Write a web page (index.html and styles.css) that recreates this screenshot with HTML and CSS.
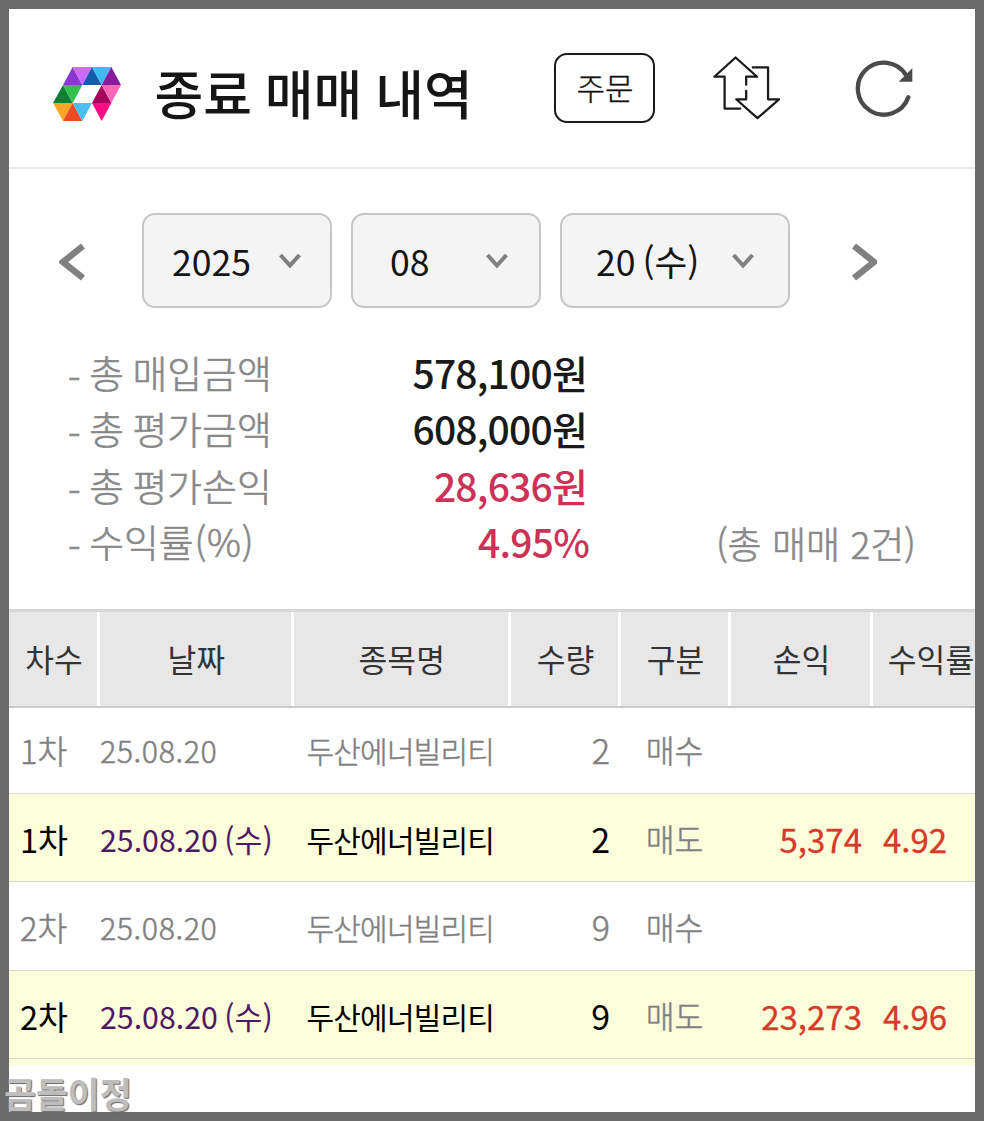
FILE: index.html
```html
<!DOCTYPE html>
<html lang="ko">
<head>
    <meta charset="UTF-8">
    <meta name="viewport" content="width=device-width, initial-scale=1.0">
    <title>종료 매매 내역</title>
    <link rel="stylesheet" href="styles.css">
</head>
<body>
    <div class="screen">
        <header class="header">
            <svg class="logo" viewBox="158 201 204 162">
                <polygon fill="#8a36d2" points="188,255 217,201 246,255"/>
                <polygon fill="#cb6afc" points="217,201 275,201 246,255"/>
                <polygon fill="#145ba8" points="246,255 275,201 304,255"/>
                <polygon fill="#3fbbf4" points="275,201 333,201 304,255"/>
                <polygon fill="#881b9e" points="304,255 333,201 362,255"/>
                <polygon fill="#0b8131" points="158,309 188,255 217,309"/>
                <polygon fill="#32c04b" points="188,255 246,255 217,309"/>
                <polygon fill="#a6045c" points="275,309 304,255 333,309"/>
                <polygon fill="#fc68b8" points="304,255 362,255 333,309"/>
                <polygon fill="#fca426" points="158,309 217,309 188,363"/>
                <polygon fill="#ec4b25" points="188,363 217,309 246,363"/>
                <polygon fill="#4cbdf0" points="217,309 275,309 246,363"/>
                <polygon fill="#fc0d84" points="275,309 333,309 304,363"/>
            </svg>
            <h1 class="title">종료 매매 내역</h1>
            <button type="button" class="order-btn">주문</button>
            <svg class="swap-icon" viewBox="70 50 202 192">
                <path d="M152 208H105V112H74L138 54L203 112H170V136"/>
                <path d="M170 155V180H140L204 237L269 180H236V84H190"/>
            </svg>
            <svg class="refresh-icon" viewBox="495 58 174 174">
                <path class="arc" d="M655 173A78 78 0 1 1 648 106"/>
                <polygon points="667,86 667,126 626,126"/>
            </svg>
        </header>

        <div class="date-nav">
            <svg class="arrow prev" viewBox="0 0 26 38"><path d="M24 3L4 19L24 35"/></svg>
            <div class="select year"><span>2025</span><svg class="caret" viewBox="0 0 22 16"><path d="M1.5 2L11 12.5L20.5 2"/></svg></div>
            <div class="select month"><span>08</span><svg class="caret" viewBox="0 0 22 16"><path d="M1.5 2L11 12.5L20.5 2"/></svg></div>
            <div class="select day"><span>20 (수)</span><svg class="caret" viewBox="0 0 22 16"><path d="M1.5 2L11 12.5L20.5 2"/></svg></div>
            <svg class="arrow next" viewBox="0 0 26 38"><path d="M3 3L23 19L3 35"/></svg>
        </div>

        <div class="summary">
            <div class="line"><span class="label"><span class="dash">-</span> 총 매입금액</span><span class="value">578,100원</span></div>
            <div class="line"><span class="label"><span class="dash">-</span> 총 평가금액</span><span class="value">608,000원</span></div>
            <div class="line"><span class="label"><span class="dash">-</span> 총 평가손익</span><span class="value up">28,636원</span></div>
            <div class="line"><span class="label"><span class="dash">-</span> 수익률<span class="unit">(%)</span></span><span class="value up percent">4.95%</span><span class="count">(총 매매 2건)</span></div>
        </div>

        <div class="table-wrap">
            <table class="trades">
                <colgroup>
                    <col class="c-no"><col class="c-date"><col class="c-name"><col class="c-qty"><col class="c-type"><col class="c-profit"><col class="c-rate">
                </colgroup>
                <thead>
                    <tr><th>차수</th><th>날짜</th><th>종목명</th><th>수량</th><th>구분</th><th>손익</th><th>수익률</th></tr>
                </thead>
                <tbody>
                    <tr class="buy first">
                        <td class="no">1차</td><td class="date">25.08.20</td><td class="name">두산에너빌리티</td><td class="qty">2</td><td class="type">매수</td><td class="profit"></td><td class="rate"></td>
                    </tr>
                    <tr class="sell">
                        <td class="no">1차</td><td class="date">25.08.20 (수)</td><td class="name">두산에너빌리티</td><td class="qty">2</td><td class="type">매도</td><td class="profit">5,374</td><td class="rate">4.92</td>
                    </tr>
                    <tr class="buy">
                        <td class="no">2차</td><td class="date">25.08.20</td><td class="name">두산에너빌리티</td><td class="qty">9</td><td class="type">매수</td><td class="profit"></td><td class="rate"></td>
                    </tr>
                    <tr class="sell">
                        <td class="no">2차</td><td class="date">25.08.20 (수)</td><td class="name">두산에너빌리티</td><td class="qty">9</td><td class="type">매도</td><td class="profit">23,273</td><td class="rate">4.96</td>
                    </tr>
                </tbody>
            </table>
            <div class="table-end"></div>
        </div>
        <div class="watermark">곰돌이정</div>
    </div>
</body>
</html>
```
FILE: styles.css
```css
* {
    box-sizing: border-box;
}
body {
    margin: 0;
    font-family: "Noto Sans CJK KR", sans-serif;
    color: #1a1a1a;
    background-color: #6b6b6b;
}
.screen {
    position: relative;
    height: 1121px;
    border: 9px solid #6b6b6b;
    background-color: #fff;
}
svg {
    display: block;
    flex: none;
    fill: none;
}

/* header */
.header {
    display: flex;
    align-items: center;
    height: 160px;
    padding-left: 43.5px;
    border-bottom: 2px solid #e8e8e8;
}
.logo {
    width: 68px;
    height: 54px;
    margin-top: 12px;
}
.title {
    width: 399px;
    margin: 7px 0 0 34px;
    font-size: 53px;
    font-weight: 500;
    line-height: 80px;
    word-spacing: -2px;
    color: #151515;
    white-space: nowrap;
}
.order-btn {
    width: 101px;
    height: 70px;
    margin-top: -1px;
    padding: 0 0 3px 2px;
    border: 2px solid #1a1a1a;
    border-radius: 13px;
    background-color: #fff;
    font-family: inherit;
    font-size: 31px;
    font-weight: 300;
    color: #111;
    -webkit-text-stroke: 0.3px;
}
.swap-icon {
    width: 67px;
    height: 64px;
    margin-left: 58px;
    stroke: #1a1a1a;
    stroke-width: 6.8;
    stroke-linecap: round;
    stroke-linejoin: round;
}
.refresh-icon {
    width: 58px;
    height: 58px;
    margin-left: 75px;
    fill: #4a4a4a;
}
.refresh-icon .arc {
    fill: none;
    stroke: #4a4a4a;
    stroke-width: 13;
    stroke-linecap: round;
}

/* date selector */
.date-nav {
    display: flex;
    align-items: center;
    height: 95px;
    margin-top: 43.5px;
    padding-left: 50px;
}
.arrow {
    width: 26px;
    height: 38px;
    margin-top: 3px;
    stroke: #808080;
    stroke-width: 6.5;
}
.select {
    display: flex;
    align-items: center;
    justify-content: space-between;
    width: 189.5px;
    height: 95px;
    margin-right: 19.5px;
    border: 2px solid #c6c6c6;
    border-radius: 13px;
    background-color: #f4f4f4;
    font-size: 35.6px;
    word-spacing: -3px;
    color: #151515;
}
.year {
    margin-left: 57px;
    padding: 0 29px 0 28px;
}
.month {
    padding: 0 31px 0 37px;
}
.day {
    width: 229.5px;
    padding: 0 34px;
}
.caret {
    width: 22px;
    height: 16px;
    margin-top: 2px;
    stroke: #808080;
    stroke-width: 4;
}
.next {
    margin-left: 42px;
}

/* totals */
.summary {
    margin-top: 36px;
    padding-left: 59px;
}
.line {
    display: flex;
    height: 56.5px;
    line-height: 56.5px;
    white-space: nowrap;
}
.label,
.count {
    font-weight: 300;
    color: #888;
    -webkit-text-stroke: 0.6px;
}
.label {
    width: 259px;
    font-size: 37.8px;
    word-spacing: -2px;
}
.dash {
    line-height: 1;
    vertical-align: -5px;
}
.unit {
    margin-left: 1px;
    letter-spacing: 0.7px;
}
.value {
    width: 260px;
    font-size: 39px;
    font-weight: 500;
    letter-spacing: -0.8px;
    text-align: right;
}
.value.up {
    color: #cb3256;
}
.value.percent {
    width: 262px;
}
.count {
    margin-left: 127px;
    padding-top: 2px;
    font-size: 37px;
}

/* trade list */
.table-wrap {
    margin-top: 39px;
    overflow: hidden;
}
.trades {
    width: 981px;
    table-layout: fixed;
    border-spacing: 0;
}
.c-no { width: 91px; }
.c-date { width: 193.5px; }
.c-name { width: 217.5px; }
.c-qty { width: 110px; }
.c-type { width: 110px; }
.c-profit { width: 142px; }
.c-rate { width: 117px; }
.trades th {
    height: 99px;
    padding: 0 1px 0 0;
    border-top: 3px solid #d6d6d6;
    border-bottom: 2px solid #cbcbcb;
    background: linear-gradient(#fff, #fff) right / 3px 100% no-repeat #e7e7e7;
    background-clip: padding-box;
    font-size: 31.3px;
    font-weight: 400;
    color: #333;
}
.trades td {
    height: 88.5px;
    padding: 3px 0 0;
    border-bottom: 1px solid #d6d9c0;
    font-size: 31.3px;
    font-weight: 300;
    line-height: 44px;
    color: #808080;
    white-space: nowrap;
    -webkit-text-stroke: 0.5px;
}
.trades .first td {
    height: 86px;
    padding-top: 0;
    border-bottom-color: #deded8;
}
.trades .sell td {
    background-color: #fcfddb;
}
.trades .no {
    padding-left: 11px;
    font-size: 32.5px;
}
.trades .date {
    font-size: 30.3px;
    word-spacing: -2px;
}
.trades .buy .date {
    letter-spacing: 0.6px;
}
.trades .name {
    padding-left: 13px;
    font-size: 30px;
    letter-spacing: -0.8px;
}
.trades .qty {
    padding-right: 11px;
    font-size: 34px;
    text-align: right;
}
.trades .type {
    padding-right: 3px;
    text-align: center;
}
.trades .profit {
    padding-right: 11px;
    font-size: 33px;
    text-align: right;
}
.trades .rate {
    padding-left: 10px;
    font-size: 33px;
}
.trades .sell .no,
.trades .sell .name,
.trades .sell .qty,
.trades .sell .date,
.trades .sell .profit,
.trades .sell .rate {
    font-weight: 400;
    color: #000;
    -webkit-text-stroke: 0;
}
.trades .sell .date {
    color: #4f1863;
}
.trades .sell .profit,
.trades .sell .rate {
    color: #d63a28;
    -webkit-text-stroke: 0.3px;
}
.table-end {
    height: 6px;
    background-color: #fcfddb;
}

.watermark {
    position: absolute;
    left: -5px;
    bottom: -5px;
    font-size: 34.7px;
    font-weight: 700;
    line-height: 48px;
    color: #bdbdbd;
    text-shadow: 1px 1px 1px #666;
}
```
